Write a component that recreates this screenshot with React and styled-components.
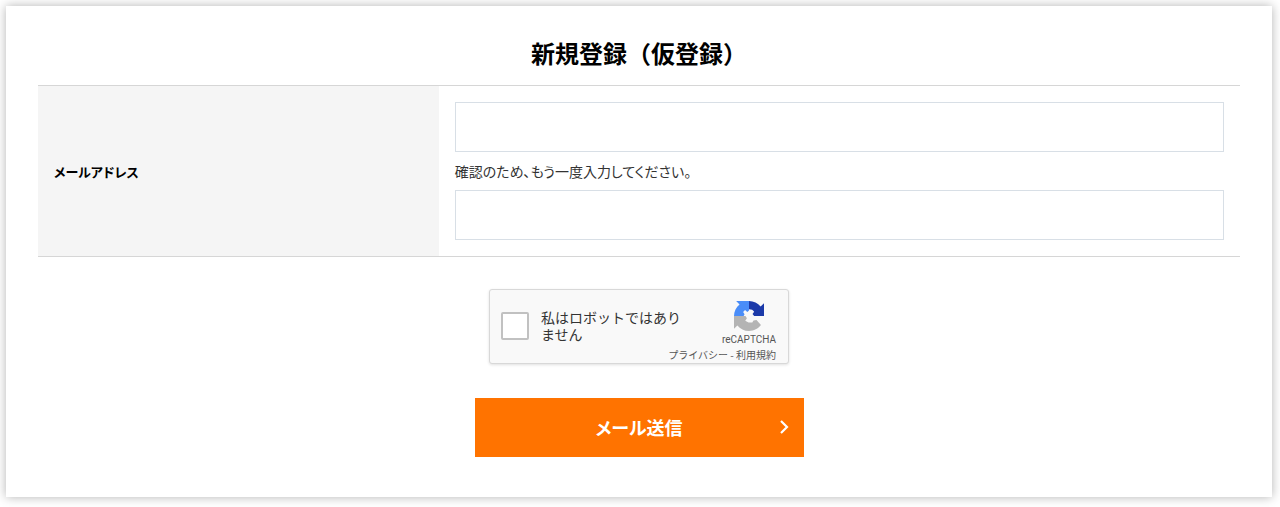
import { useState } from 'react';
import styled, { createGlobalStyle } from 'styled-components';

const GlobalStyle = createGlobalStyle`
  *, *::before, *::after {
    box-sizing: border-box;
  }
  body {
    margin: 0;
    background-color: #fff;
    color: #333;
    font-family: 'Noto Sans CJK JP', sans-serif;
    font-size: 14px;
    font-feature-settings: 'palt';
  }
`;
const Card = styled.main`
  margin: 6px 8px 10px 6px;
  padding: 31px 32px 40px;
  background-color: #fff;
  box-shadow: 0 0 10px rgba(0, 0, 0, 0.3);
`;
const Title = styled.h1`
  margin: 0 0 16px;
  color: #000;
  font-size: 24px;
  font-weight: 700;
  line-height: 32px;
  text-align: center;
  font-feature-settings: normal;
`;
const Form = styled.form`
  display: flex;
  flex-direction: column;
  align-items: center;
`;
const FieldRow = styled.div`
  display: grid;
  grid-template-columns: 1fr 2fr;
  width: 100%;
  border-top: 1px solid #d6d6d6;
  border-bottom: 1px solid #d6d6d6;
`;
const FieldLabel = styled.label`
  display: flex;
  align-items: center;
  padding: 16px;
  background-color: #f5f5f5;
  color: #000;
  font-size: 13px;
  font-weight: 700;
`;
const FieldBody = styled.div`
  display: flex;
  flex-direction: column;
  padding: 16px;
`;
const TextInput = styled.input`
  width: 100%;
  height: 50px;
  padding: 0 12px;
  border: 1px solid #d8dfe6;
  background-color: #fff;
  font: inherit;
`;
const ConfirmLabel = styled.label`
  line-height: 38px;
`;
const Captcha = styled.div`
  display: flex;
  justify-content: space-between;
  width: 300px;
  height: 75px;
  margin: 32px 0 34px;
  padding-left: 11px;
  border: 1px solid #d8d8d8;
  border-radius: 3px;
  background-color: #f9f9f9;
  box-shadow: 0 1px 3px rgba(0, 0, 0, 0.12);
  font-feature-settings: normal;
`;
const CaptchaLabel = styled.label`
  display: flex;
  flex: 0 0 180px;
  align-items: center;
  gap: 12px;
  padding-bottom: 2px;
  font-size: 14px;
  line-height: 17px;
`;
const Checkbox = styled.input`
  flex: none;
  appearance: none;
  width: 28px;
  height: 28px;
  margin: 0;
  border: 2px solid #c1c1c1;
  border-radius: 2px;
  background-color: #fff;

  &:checked {
    background-color: #4285f4;
  }
`;
const CaptchaBrand = styled.div`
  display: flex;
  flex-direction: column;
  align-items: flex-end;
  padding: 11px 12px 0 0;
  margin-left: -40px;
  color: #555;
  font-size: 10px;
  white-space: nowrap;
`;
const BrandMark = styled.div`
  display: flex;
  flex-direction: column;
  align-items: center;
  font-family: Roboto, sans-serif;
  line-height: 18px;
`;
const CaptchaLinks = styled.div`
  line-height: 12px;
`;
const CaptchaLink = styled.a`
  color: inherit;
  text-decoration: none;
`;
const SubmitButton = styled.button`
  display: grid;
  grid-template-columns: 1fr auto 1fr;
  align-items: center;
  width: 329px;
  max-width: 100%;
  height: 59px;
  padding: 0 14px 2px;
  border: 0;
  background-color: #ff7300;
  color: #fff;
  font-family: inherit;
  font-size: 18px;
  font-weight: 700;
  font-feature-settings: inherit;
  cursor: pointer;

  span {
    grid-column: 2;
  }
  svg {
    justify-self: end;
  }
`;

const RecaptchaLogo = () => (
  <svg width="30" height="30" viewBox="0 0 64 64" aria-hidden="true">
    <path
      fill="#1c3aa9"
      d="M64 32V4.7l-7.2 7.1C50.9 4.7 42 0 32 0v17.5c5 0 9 1.5 11 5.5L39.5 27.5 43 32z"
    />
    <path
      fill="#4a8df8"
      d="M32 0H4.6l7.2 7.3C4.6 13.1 0 22 0 32h20.5l2-3.5-3-5 4-4.5 5 4.5 3.5-3z"
    />
    <path
      fill="#b4b4b4"
      d="M0 32v27.3l7.2-7.2C13 59.3 22 64 32 64c10.4 0 19.6-5 25.5-12.7L48 40.5l-6.5 1-2.5 4.5h-8l-7-4 3.5-5-3-5z"
    />
  </svg>
);

const RecaptchaBox = () => {
  const [checked, setChecked] = useState(false);

  return (
    <Captcha>
      <CaptchaLabel>
        <Checkbox
          type="checkbox"
          checked={checked}
          onChange={(e) => setChecked(e.target.checked)}
        />
        <span>私はロボットではありません</span>
      </CaptchaLabel>
      <CaptchaBrand>
        <BrandMark>
          <RecaptchaLogo />
          reCAPTCHA
        </BrandMark>
        <CaptchaLinks>
          <CaptchaLink href="#privacy">プライバシー</CaptchaLink>
          {' - '}
          <CaptchaLink href="#terms">利用規約</CaptchaLink>
        </CaptchaLinks>
      </CaptchaBrand>
    </Captcha>
  );
};

const App = () => {
  const onSubmit = (e) => e.preventDefault();

  return (
    <>
      <GlobalStyle />
      <Card>
        <Title>新規登録（仮登録）</Title>
        <Form onSubmit={onSubmit}>
          <FieldRow>
            <FieldLabel htmlFor="email">メールアドレス</FieldLabel>
            <FieldBody>
              <TextInput id="email" type="email" />
              <ConfirmLabel htmlFor="email-confirm">
                確認のため、もう一度入力してください。
              </ConfirmLabel>
              <TextInput id="email-confirm" type="email" />
            </FieldBody>
          </FieldRow>
          <RecaptchaBox />
          <SubmitButton type="submit">
            <span>メール送信</span>
            <svg width="12" height="16" viewBox="0 0 12 16" aria-hidden="true">
              <path d="M3 2l6 6-6 6" fill="none" stroke="#fff" strokeWidth="2.2" />
            </svg>
          </SubmitButton>
        </Form>
      </Card>
    </>
  );
};

export default App;
